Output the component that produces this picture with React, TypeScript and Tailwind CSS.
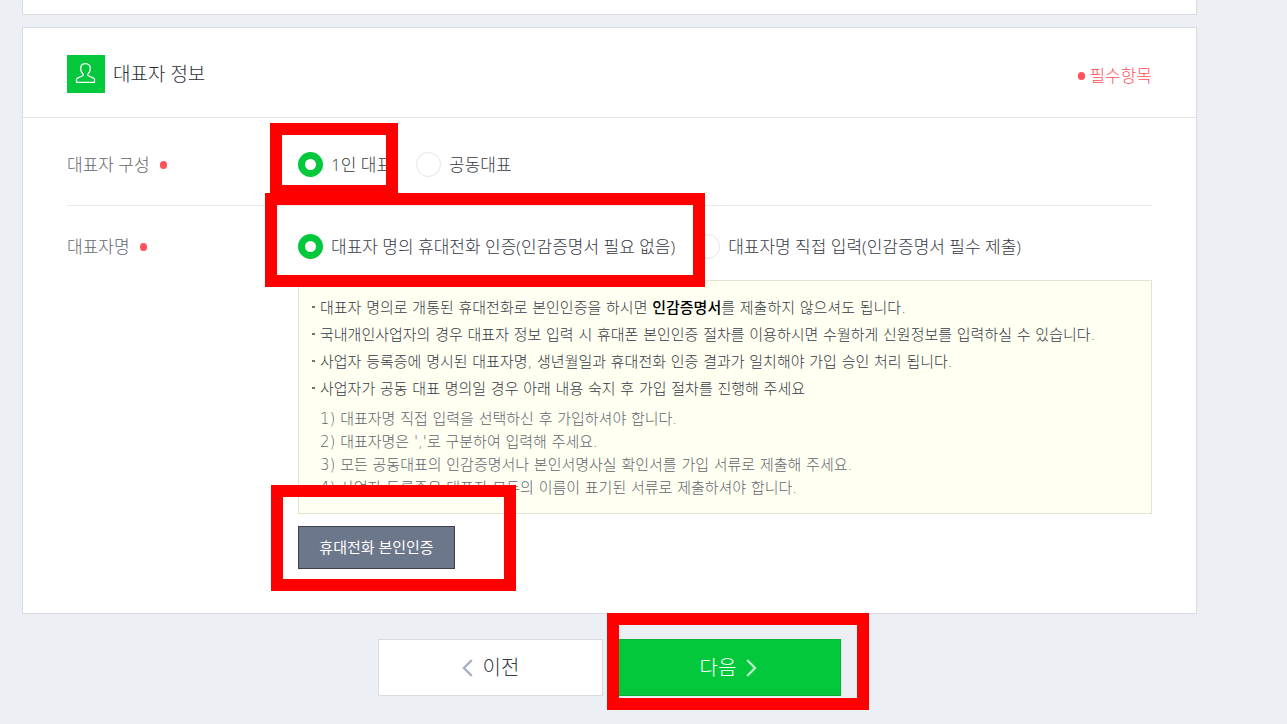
import { useState, type ReactNode } from "react";

const notices: ReactNode[] = [
  <>
    대표자 명의로 개통된 휴대전화로 본인인증을 하시면 <strong className="font-medium text-black">인감증명서</strong>를 제출하지 않으셔도 됩니다.
  </>,
  "국내개인사업자의 경우 대표자 정보 입력 시 휴대폰 본인인증 절차를 이용하시면 수월하게 신원정보를 입력하실 수 있습니다.",
  "사업자 등록증에 명시된 대표자명, 생년월일과 휴대전화 인증 결과가 일치해야 가입 승인 처리 됩니다.",
  "사업자가 공동 대표 명의일 경우 아래 내용 숙지 후 가입 절차를 진행해 주세요",
];

const steps = [
  "1) 대표자명 직접 입력을 선택하신 후 가입하셔야 합니다.",
  "2) 대표자명은 ','로 구분하여 입력해 주세요.",
  "3) 모든 공동대표의 인감증명서나 본인서명사실 확인서를 가입 서류로 제출해 주세요.",
  "4) 사업자 등록증은 대표자 모두의 이름이 표기된 서류로 제출하셔야 합니다.",
];

function Dot() {
  return <span aria-hidden="true" className="h-2 w-[7px] shrink-0 rounded-full bg-[#ff525a]" />;
}

/** Red frame that draws attention to the control it surrounds. */
function Highlight({ className }: { className: string }) {
  return <span aria-hidden="true" className={`pointer-events-none absolute z-10 border-[12px] border-[#ff0000] ${className}`} />;
}

type RadioProps = {
  name: string;
  label: string;
  checked: boolean;
  onSelect: () => void;
  children?: ReactNode;
};

function Radio({ name, label, checked, onSelect, children }: RadioProps) {
  return (
    <label className="relative flex h-[25px] cursor-pointer items-center gap-2 whitespace-nowrap text-[17px] text-[#363944]">
      <input
        type="radio"
        name={name}
        checked={checked}
        onChange={onSelect}
        className="size-[25px] shrink-0 cursor-pointer appearance-none rounded-full border border-[#e3e4ec] bg-white checked:border-[7px] checked:border-[#03c83c]"
      />
      {label}
      {children}
    </label>
  );
}

function Row({ label, className, children }: { label: string; className: string; children: ReactNode }) {
  return (
    <div role="group" aria-label={label} className={`flex ${className}`}>
      <div className="flex h-[25px] w-[231px] shrink-0 items-center gap-[10px] text-[17px] text-[#62656d]">
        {label}
        <Dot />
      </div>
      <div className="min-w-0 flex-1">{children}</div>
    </div>
  );
}

export default function App() {
  const [structure, setStructure] = useState("single");
  const [method, setMethod] = useState("phone");

  return (
    <div className="min-h-screen overflow-x-hidden bg-[#ecf0f5] pr-[90px] pb-6 pl-[22px] font-['Open_Sans','Noto_Sans_CJK_KR',sans-serif] font-light">
      <div className="h-[15px] border border-t-0 border-[#dadbe2] bg-white" />

      <main>
        <section className="mt-3 border border-[#dadbe2] bg-white">
          <header className="flex items-center justify-between border-b border-[#e3e3ec] px-11 pt-[27px] pb-6">
            <h1 className="flex items-center gap-2 text-[19px] text-[#2b2d36]">
              <span className="flex size-[38px] items-center justify-center bg-[#03c83c]">
                <svg width="22" height="22" viewBox="0 0 22 22" fill="none" stroke="white" strokeWidth="1.3" strokeLinejoin="round" aria-hidden="true">
                  <path d="M8.200 11.200C6.600 10 5.700 8.100 5.700 5.600C5.700 2.600 7.500 0.700 10.500 0.700s4.800 1.900 4.800 4.900c0 2.500-.9 4.400-2.500 5.600v1.300l5.700 2.600c.7.3 1 .8 1 1.500V19.300H1.500v-2.700c0-.7.3-1.200 1-1.500l5.700-2.600z" />
                </svg>
              </span>
              대표자 정보
            </h1>
            <p className="flex items-center gap-1 pt-1 text-[17px] text-[#ff525a]">
              <Dot />
              필수항목
            </p>
          </header>

          <div className="px-11 pb-11">
            <Row label="대표자 구성" className="border-b border-[#ebebee] pt-[34px] pb-7">
              <div className="flex gap-6">
                <Radio name="structure" label="1인 대표" checked={structure === "single"} onSelect={() => setStructure("single")}>
                  <Highlight className="-top-[29px] -left-7 h-[74px] w-32" />
                </Radio>
                <Radio name="structure" label="공동대표" checked={structure === "joint"} onSelect={() => setStructure("joint")} />
              </div>
            </Row>

            <Row label="대표자명" className="pt-7">
              <div className="flex gap-5">
                <Radio
                  name="method"
                  label="대표자 명의 휴대전화 인증(인감증명서 필요 없음)"
                  checked={method === "phone"}
                  onSelect={() => setMethod("phone")}
                >
                  <Highlight className="-top-[41px] -left-[33px] h-[94px] w-[440px]" />
                </Radio>
                <Radio
                  name="method"
                  label="대표자명 직접 입력(인감증명서 필수 제출)"
                  checked={method === "direct"}
                  onSelect={() => setMethod("direct")}
                />
              </div>

              <div className="mt-[21px] border border-[#e3e3d3] bg-[#fffff2] px-[13px] pt-[14px] pb-[13px] font-['DejaVu_Sans','Noto_Sans_CJK_KR',sans-serif] text-[15px]">
                <ul className="leading-[27px] text-[#363944]">
                  {notices.map((notice, index) => (
                    <li key={index} className="flex gap-[5px]">
                      <span aria-hidden="true" className="mt-[11px] h-0.5 w-[3px] shrink-0 bg-[#70737c]" />
                      <span>{notice}</span>
                    </li>
                  ))}
                </ul>
                <ul className="mt-[5px] pl-2 leading-[23px] text-[#62656d]">
                  {steps.map((step) => (
                    <li key={step}>{step}</li>
                  ))}
                </ul>
              </div>

              <div className="relative mt-3 w-fit">
                <button type="button" className="h-[43px] w-[157px] cursor-pointer border border-[#3d414d] bg-[#6c778b] text-[15px] font-normal text-white">
                  휴대전화 본인인증
                </button>
                <Highlight className="-top-[41px] -left-[27px] h-[106px] w-[245px]" />
              </div>
            </Row>
          </div>
        </section>

        <div className="mt-[25px] flex justify-center gap-[13px] text-xl">
          <button type="button" className="flex h-[57px] w-[225px] cursor-pointer items-center justify-center gap-[10px] border border-[#dadbe2] bg-white text-[#363944]">
            <svg width="11" height="18" viewBox="0 0 11 18" fill="none" stroke="#a9aec2" strokeWidth="2.4" aria-hidden="true">
              <path d="M9.800 1L2 9l7.800 8" />
            </svg>
            이전
          </button>
          <div className="relative">
            <button type="button" className="flex h-[57px] w-[225px] cursor-pointer items-center justify-center gap-[10px] border border-[#08b238] bg-[#03c83c] text-white">
              다음
              <svg width="11" height="18" viewBox="0 0 11 18" fill="none" stroke="#b5f0c6" strokeWidth="2.400" aria-hidden="true">
                <path d="M1.200 1L9 9l-7.800 8" />
              </svg>
            </button>
            <Highlight className="-top-[26px] -left-[9px] h-[97px] w-[262px]" />
          </div>
        </div>
      </main>
    </div>
  );
}
